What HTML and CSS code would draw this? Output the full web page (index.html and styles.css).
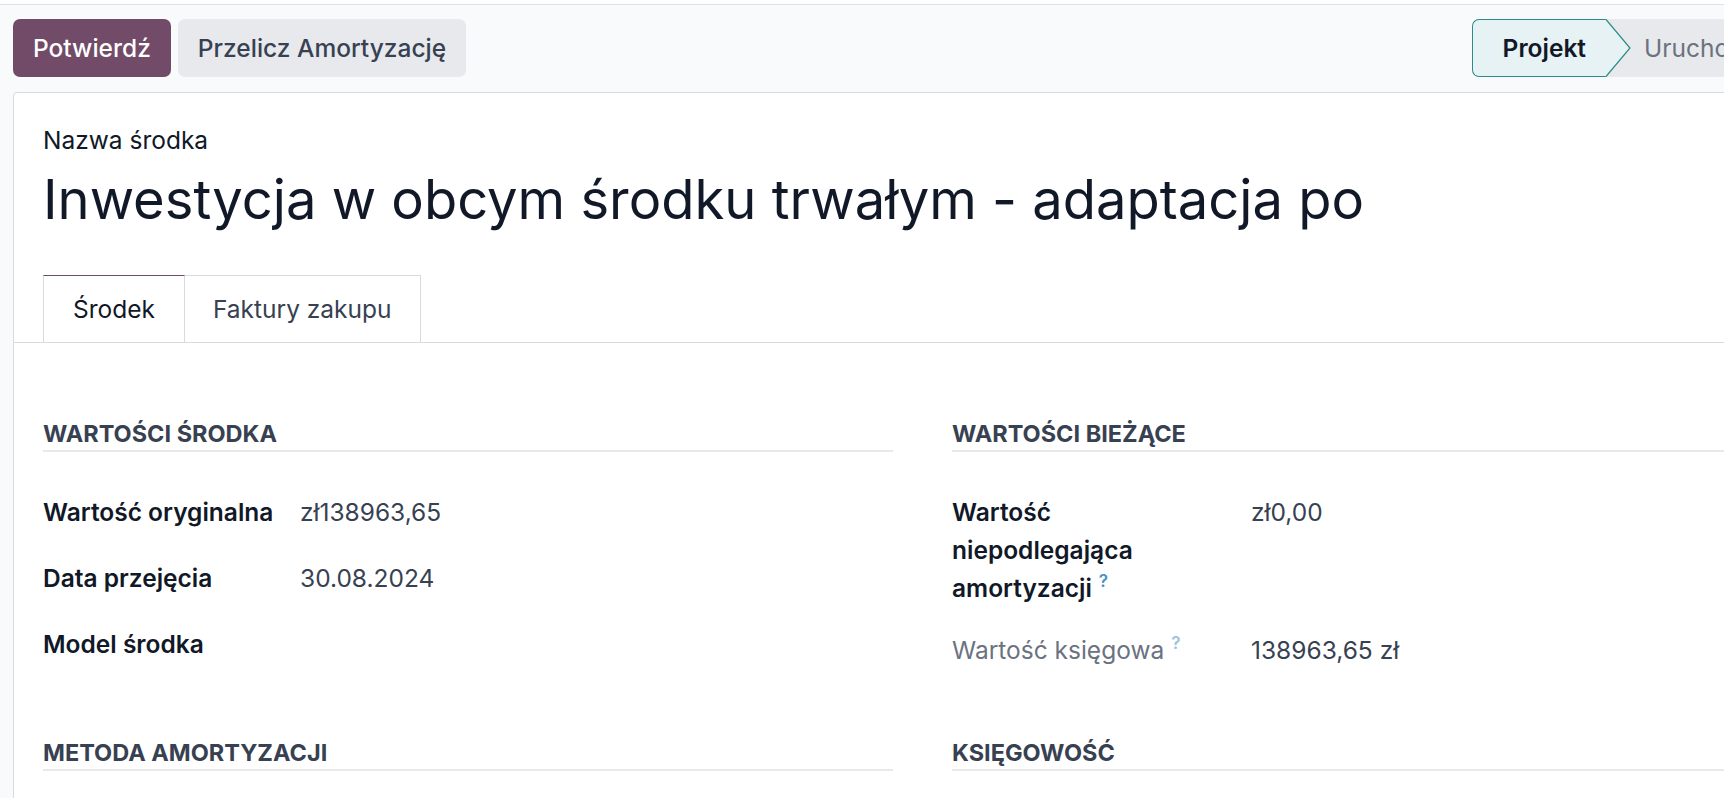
FILE: index.html
```html
<!DOCTYPE html>
<html lang="pl">
<head>
<meta charset="utf-8">
<title>Inwestycja w obcym środku trwałym</title>
<link rel="stylesheet" href="styles.css">
</head>
<body>
<div class="top-strip"></div>
<div class="page">
  <div class="control-panel">
    <div class="actions">
      <button class="btn btn-primary">Potwierdź</button>
      <button class="btn btn-secondary">Przelicz Amortyzację</button>
    </div>
    <div class="statusbar">
      <div class="status status-current">Projekt<svg class="status-arrow" viewBox="0 0 25 58" width="25" height="58"><polygon points="0,0 24,29 0,58" fill="#e6f2f3"/><polyline points="0,0.5 24,29 0,57.5" fill="none" stroke="#2b8a8c" stroke-width="1.2"/></svg></div>
      <div class="status status-next">Uruchomiony</div>
    </div>
  </div>

  <div class="sheet">
    <div class="name-label">Nazwa środka</div>
    <h1 class="title">Inwestycja w obcym środku trwałym - adaptacja po</h1>

    <div class="tabs">
      <div class="tab active">Środek</div>
      <div class="tab">Faktury zakupu</div>
    </div>

    <div class="tab-pane">
      <div class="groups">
        <section class="group">
          <div class="separator">Wartości środka</div>
          <div class="fields fields-left">
            <div class="label">Wartość oryginalna</div>
            <div class="value">zł138963,65</div>
            <div class="label">Data przejęcia</div>
            <div class="value">30.08.2024</div>
            <div class="label">Model środka</div>
            <div class="value"></div>
          </div>
        </section>
        <section class="group">
          <div class="separator">Wartości bieżące</div>
          <div class="fields fields-right">
            <div class="label">Wartość niepodlegająca amortyzacji<span class="help">?</span></div>
            <div class="value">zł0,00</div>
            <div class="label label-muted">Wartość księgowa<span class="help help-muted">?</span></div>
            <div class="value">138963,65 zł</div>
          </div>
        </section>
        <section class="group">
          <div class="separator">Metoda amortyzacji</div>
        </section>
        <section class="group">
          <div class="separator">Księgowość</div>
        </section>
      </div>
    </div>
  </div>
</div>
</body>
</html>
```

FILE: styles.css
```css
html, body {
  margin: 0;
  padding: 0;
}

body {
  overflow: hidden;
  font-family: Inter, "Noto Sans", "Liberation Sans", sans-serif;
  font-size: 24.5px;
  line-height: 38px;
  color: #111827;
  background: #f9fafb;
}

.top-strip {
  height: 4px;
  background: #ffffff;
  border-bottom: 1px solid #dee2e6;
}

.page {
  width: 1845px;
  padding: 0 13px;
  box-sizing: border-box;
}

/* control panel */
.control-panel {
  display: flex;
  justify-content: space-between;
  align-items: center;
  padding: 14px 0 15px;
}

.actions {
  display: flex;
  gap: 7px;
}

.btn {
  height: 58px;
  padding: 0 20px;
  border: 0;
  border-radius: 7px;
  font: inherit;
  font-weight: 500;
  cursor: pointer;
}

.btn-primary {
  background: #714b67;
  color: #ffffff;
}

.btn-secondary {
  background: #e7e9ed;
  color: #374151;
}

.statusbar {
  display: flex;
}

.status {
  height: 58px;
  box-sizing: border-box;
  display: flex;
  align-items: center;
}

.status-current {
  position: relative;
  z-index: 1;
  background: #e6f2f3;
  border: 1px solid #2b8a8c;
  border-right: 0;
  border-radius: 7px 0 0 7px;
  padding: 0 20px 0 30px;
  font-weight: 600;
  color: #111827;
}

.status-arrow {
  position: absolute;
  left: 100%;
  top: -1px;
  display: block;
}

.status-next {
  width: 226px;
  padding-left: 38px;
  background: #e7e9ed;
  color: #6b7280;
}

/* sheet */
.sheet {
  background: #ffffff;
  border: 1px solid #d8dadd;
  border-radius: 4px 4px 0 0;
  padding: 28px 29px 40px;
  min-height: 800px;
}

.name-label {
  line-height: 38px;
  color: #111827;
}

.title {
  margin: 7px 0 0;
  font-size: 54.3px;
  font-weight: 400;
  line-height: 66px;
  color: #111827;
}

.tabs {
  display: flex;
  margin: 43px -29px 0;
  padding: 0 29px;
  border-bottom: 1px solid #d8dadd;
}

.tab {
  padding: 14px 29px;
  border: 1px solid #d8dadd;
  border-bottom: 0;
  color: #374151;
}

.tab + .tab {
  border-left: 0;
  padding: 14px 28px;
}

.tab.active {
  border-top-color: #714b67;
  color: #111827;
}

.tab-pane {
  padding-top: 74px;
}

.groups {
  display: grid;
  grid-template-columns: 850px 850px;
  column-gap: 59px;
  row-gap: 61px;
  align-items: start;
}

.separator {
  font-size: 23.5px;
  line-height: 33px;
  font-weight: 700;
  text-transform: uppercase;
  color: #374151;
  border-bottom: 2px solid #e7e9ed;
}

.fields {
  display: grid;
  row-gap: 22px;
  margin-top: 41px;
  align-items: start;
}

.fields-left {
  grid-template-columns: 257px 1fr;
}

.fields-right {
  grid-template-columns: 250px 1fr;
  column-gap: 49px;
  row-gap: 24px;
}

.label {
  font-weight: 600;
  line-height: 38px;
  color: #111827;
}

.label-muted {
  font-weight: 400;
  color: #6b7280;
}

.value {
  line-height: 38px;
  padding-bottom: 6px;
  min-height: 38px;
  color: #374151;
}

.help {
  display: inline-block;
  margin-left: 7px;
  font-size: 17px;
  line-height: 1;
  font-weight: 600;
  vertical-align: 10px;
  color: #4a93c2;
}

.help-muted {
  color: #9ec4dd;
}
```
